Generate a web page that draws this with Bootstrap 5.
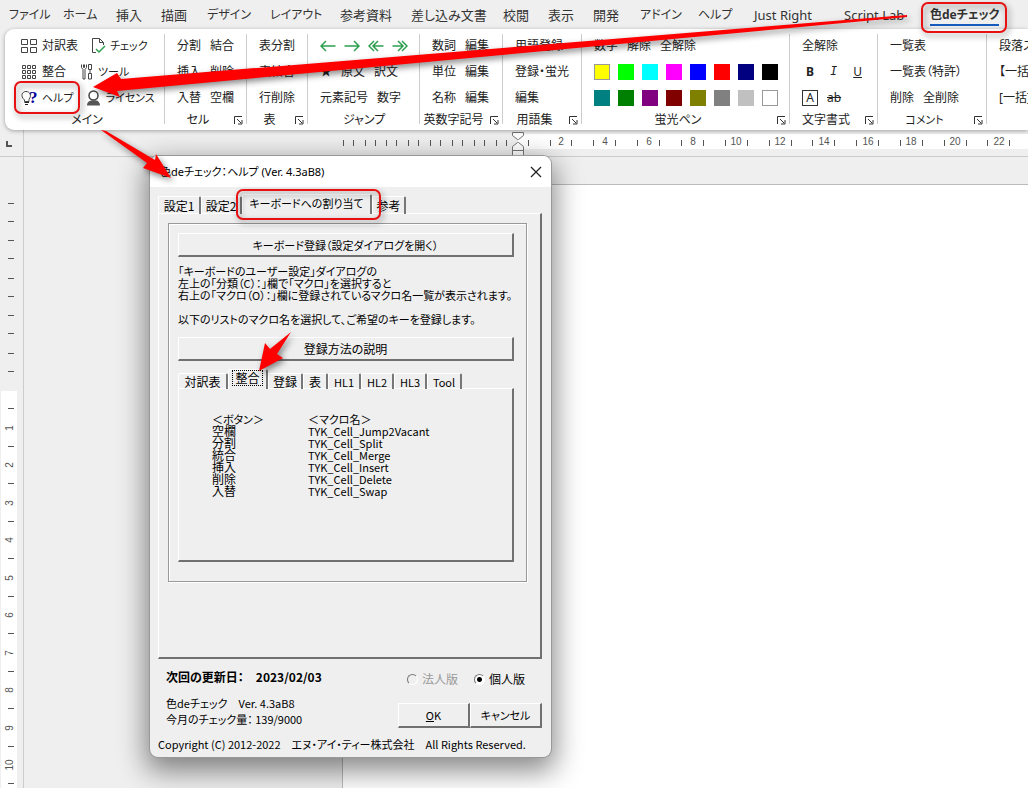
<!DOCTYPE html>
<html lang="ja">
<head>
<meta charset="utf-8">
<meta name="viewport" content="width=device-width, initial-scale=1">
<title>色deチェック ヘルプ</title>
<link rel="stylesheet" href="https://cdn.jsdelivr.net/npm/bootstrap@5.3.0/dist/css/bootstrap.min.css">
<script src="https://cdn.jsdelivr.net/npm/bootstrap@5.3.0/dist/js/bootstrap.bundle.min.js"></script>
<style>
body{background:#efefef;color:#222;font:12px/16px "Noto Sans","Noto Sans CJK JP",sans-serif;font-feature-settings:"palt";overflow:hidden}
button{font:inherit;color:inherit;background:none;border:0;padding:0;white-space:nowrap}
a{color:inherit;text-decoration:none}
.kana{font-size:11px}
.menu-tabs{display:grid;grid-template-columns:54px 53px 45px 46px 63px 70px 71px 92px 45px 45px 47px 58px 56px 90px 86px 70px;height:29px;padding:6px 0 0 9px;font-size:13px;line-height:18px;color:#333;white-space:nowrap}
.menu-tabs .kana{font-size:12px}
.menu-tabs .on{font-weight:700;border-bottom:2px solid #185abd;justify-self:start;height:20px}
.ribbon{height:101px;margin-left:5px;background:#fff;border-radius:9px 0 0 9px;box-shadow:0 1px 4px #0005;overflow:hidden;position:relative}
.rgroup{flex:none;padding:4px 0 0 12px;position:relative}
.rgroup:not(:last-child)::after{content:"";position:absolute;right:0;top:5px;height:90px;width:1px;background:#ccc}
.rrow{display:flex;height:26px;align-items:center;gap:9px;white-space:nowrap}
.rname{display:flex;height:18px;align-items:center;justify-content:center;margin-left:-12px;position:relative}
.rname:has(button){padding-right:16px}
.rname button{position:absolute;right:4px;top:5px;width:9px;height:9px;line-height:0}
.rname button svg,.rrow svg{display:block}
.ic{display:flex;align-items:center;gap:4px}
.swatch{width:16px;height:16px;margin-right:-1px}
.w1{width:160px}.w2{width:82px}.w3{width:61px}.w4{width:112px}.w5{width:83px}.w6{width:79px}.w7{width:208px}.w8{width:88px}.w9{width:109px}.w10{width:120px}
.hruler{height:27px;border-bottom:1px solid #ccc}
.hruler svg,.vruler svg{display:block}
.hruler text,.vruler text{font:10px "Liberation Sans",sans-serif;fill:#555;text-anchor:middle}
.vruler{width:24px;border-right:1px solid #ccc;flex:none;overflow:hidden}
.corner{width:24px;flex:none;border-right:1px solid #ccc}
.work{height:631px}
.page{margin:27px 0 0 318px;border:solid #bbb;border-width:1px 0 0 1px;background:#fff}
.dialog{position:absolute;left:150px;top:156px;width:401px;background:#efefef;border-radius:8px;box-shadow:0 0 0 1px #999,0 10px 28px 4px #0007;color:#000;font-family:"Noto Sans CJK JP",sans-serif}
.titlebar{height:31px;background:#fff;border-radius:8px 8px 0 0;padding:0 9px 0 10px;font-family:"Noto Sans","Noto Sans CJK JP",sans-serif;line-height:18px}
.dbody{padding:7px 9px 5px 8px}
.raised{border:solid;border-width:1px 2px 2px 1px;border-color:#fff #707070 #707070 #fff}
.tabset{display:flex;align-items:flex-end;position:relative;margin-bottom:-1px}
.tabset button{height:16px;line-height:12px;display:flex;align-items:center;justify-content:center;border:solid;border-width:1px 2px 0 1px;border-color:#fff #777 transparent #fff;flex:none;border-radius:2px 2px 0 0}
.tabset button.on{height:20px;background:#efefef;padding-bottom:4px}
.tabset .on .focus{outline:1px dotted #000;padding:1px 2px}
.tabset .tall{height:18px}
.pane{padding:9px 13px 0 9px;height:446px}
.fieldbox{border:1px solid #999;box-shadow:1px 1px 0 #fff,inset 1px 1px 0 #fff;padding:9px 12px 0 9px;height:359px}
.wide{display:block;width:100%;height:24px;line-height:20px}
.note{font-size:11px;line-height:12px;margin:8px 0 12px;white-space:nowrap}
.subpane{height:174px;padding:24px 0 0 33px}
.macros{line-height:12px;border-collapse:collapse}
.macros td,.macros th{padding:0;font-weight:400}
.macros td:last-child,.macros th{font-size:11px}
.macros th:first-child,.macros td:first-child{width:96px}
.radio{appearance:none;width:11px;height:11px;margin:0;border-radius:50%;border:1px solid;border-color:#777 #fff #fff #777;background:#fff}
.radio:checked{background:radial-gradient(#000 0 2px,#fff 3px)}
.radio:disabled{background:#efefef}
.off{color:#999}
.cmd{width:72px;height:25px}
.marks{position:absolute;left:0;top:0;pointer-events:none;filter:drop-shadow(2px 3px 3px #0007)}
</style>
</head>
<body>
<nav class="menu-tabs">
<a href="#" class="kana">ファイル</a><a href="#" class="kana">ホーム</a><a href="#">挿入</a><a href="#">描画</a><a href="#" class="kana">デザイン</a><a href="#" class="kana">レイアウト</a><a href="#">参考資料</a><a href="#">差し込み文書</a><a href="#">校閲</a><a href="#">表示</a><a href="#">開発</a><a href="#" class="kana">アドイン</a><a href="#" class="kana">ヘルプ</a><a href="#">Just Right</a><a href="#">Script Lab</a><a href="#" class="on kana">色deチェック</a>
</nav>
<svg width="0" height="0" class="position-absolute"><defs><symbol id="launch" viewBox="0 0 9 9"><path d="M.5 8V.5H8M3 3l4 4M8 4v4H4" fill="none" stroke="#333"/></symbol></defs></svg>
<section class="ribbon d-flex">
<div class="rgroup w1 ps-3">
<div class="rrow" style="gap:14px"><button class="ic"><svg width="17" height="14" fill="none" stroke="#444"><path d="M.5.5h6v5h-6zM9.500.5h6v5h-6zM.5 8.500h6v5h-6zM9.500 8.500h6v5h-6z"/></svg>対訳表</button><button class="ic kana"><svg width="14" height="16" fill="none" stroke="#444"><path d="M4 14.500H.5V.5h7l4 4V7M7.500.5v4h4"/><path d="M4 11l3 3 6-6" stroke="#2e9e4f" stroke-width="1.500"/></svg>チェック</button></div>
<div class="rrow" style="gap:14px"><button class="ic"><svg width="17" height="14" fill="none" stroke="#444"><path d="M1.500.5h3v3h-3zM6.500.5h3v3h-3zM11.500.5h3v3h-3zM1.500 5.500h3v3h-3zM6.500 5.500h3v3h-3zM11.500 5.500h3v3h-3zM1.500 10.500h3v3h-3zM6.500 10.500h3v3h-3zM11.500 10.500h3v3h-3z"/></svg>整合</button><button class="ic kana"><svg width="14" height="16" fill="none" stroke="#444"><path d="M1.500.5v3l1.500 2v9.500h2V5.500l1.500-2v-3M3.500.5v3h1v-3M8.500.5h3v5h-3zM10 5.500v4M8.500 9.500h3v5.500h-3z"/></svg>ツール</button></div>
<div class="rrow" style="gap:12px"><button class="ic kana"><svg width="17" height="16"><path d="M3.500 10C-1 6 1 1.500 5 1.500s6 4 3 8v2H3.500z" fill="#fff" stroke="#444"/><path d="M3.500 12.500H8M4 14.500h3" stroke="#222"/><text x="8" y="13" font-size="17" font-weight="700" fill="#009" font-family="Liberation Serif">?</text></svg>ヘルプ</button><button class="ic kana"><svg width="16" height="16"><path d="M1 15.500c0-4 3-5 5-5h4c2 0 4 2 4 5z" fill="#555"/><circle cx="7.500" cy="5.500" r="4.500" fill="#fff" stroke="#444" stroke-width="1.500"/></svg>ライセンス</button></div>
<div class="rname">メイン</div></div>
<div class="rgroup w2">
<div class="rrow"><button>分割</button><button>結合</button></div><div class="rrow"><button>挿入</button><button>削除</button></div><div class="rrow"><button>入替</button><button>空欄</button></div>
<div class="rname">セル<button aria-label="セル 詳細"><svg width="9" height="9"><use href="#launch"/></svg></button></div></div>
<div class="rgroup w3">
<div class="rrow"><button>表分割</button></div><div class="rrow"><button>表結合</button></div><div class="rrow"><button>行削除</button></div>
<div class="rname">表<button aria-label="表 詳細"><svg width="9" height="9"><use href="#launch"/></svg></button></div></div>
<div class="rgroup w4">
<div class="rrow" style="gap:8px">
<button aria-label="前"><svg width="16" height="12" fill="none" stroke="#2e9e4f" stroke-width="1.500"><path d="M15.500 6H1M6 1L1 6l5 5"/></svg></button>
<button aria-label="次"><svg width="16" height="12" fill="none" stroke="#2e9e4f" stroke-width="1.500"><path d="M.5 6H15M10 1l5 5-5 5"/></svg></button>
<button aria-label="最初"><svg width="16" height="12" fill="none" stroke="#2e9e4f" stroke-width="1.500"><path d="M15.500 6H5M6 1L1 6l5 5M10 1L5 6l5 5"/></svg></button>
<button aria-label="最後"><svg width="16" height="12" fill="none" stroke="#2e9e4f" stroke-width="1.500"><path d="M.5 6H11M6 1l5 5-5 5M10 1l5 5-5 5"/></svg></button></div>
<div class="rrow"><button>★</button><button>原文</button><button>訳文</button></div><div class="rrow"><button>元素記号</button><button>数字</button></div>
<div class="rname">ジャンプ</div></div>
<div class="rgroup w5">
<div class="rrow"><button>数詞</button><button>編集</button></div><div class="rrow"><button>単位</button><button>編集</button></div><div class="rrow"><button>名称</button><button>編集</button></div>
<div class="rname">英数字記号<button aria-label="英数字記号 詳細"><svg width="9" height="9"><use href="#launch"/></svg></button></div></div>
<div class="rgroup w6">
<div class="rrow"><button>用語登録</button></div><div class="rrow"><button>登録・蛍光</button></div><div class="rrow"><button>編集</button></div>
<div class="rname">用語集<button aria-label="用語集 詳細"><svg width="9" height="9"><use href="#launch"/></svg></button></div></div>
<div class="rgroup w7">
<div class="rrow"><button>数字</button><button>解除</button><button>全解除</button></div>
<div class="rrow"><button class="swatch" aria-label="黄" style="background:#ff0;border:1px solid #999"></button><button class="swatch" aria-label="明るい緑" style="background:#0f0"></button><button class="swatch" aria-label="水色" style="background:#0ff"></button><button class="swatch" aria-label="ピンク" style="background:#f0f"></button><button class="swatch" aria-label="青" style="background:#00f"></button><button class="swatch" aria-label="赤" style="background:#f00"></button><button class="swatch" aria-label="紺" style="background:#000080"></button><button class="swatch" aria-label="黒" style="background:#000"></button></div>
<div class="rrow"><button class="swatch" aria-label="青緑" style="background:#008080"></button><button class="swatch" aria-label="緑" style="background:#008000"></button><button class="swatch" aria-label="紫" style="background:#800080"></button><button class="swatch" aria-label="濃い赤" style="background:#800000"></button><button class="swatch" aria-label="濃い黄" style="background:#808000"></button><button class="swatch" aria-label="灰50%" style="background:#808080"></button><button class="swatch" aria-label="灰25%" style="background:#c0c0c0"></button><button class="swatch" aria-label="なし" style="background:#fff;border:1px solid #999"></button></div>
<div class="rname">蛍光ペン<button aria-label="蛍光ペン 詳細"><svg width="9" height="9"><use href="#launch"/></svg></button></div></div>
<div class="rgroup w8">
<div class="rrow"><button>全解除</button></div><div class="rrow ps-1" style="gap:16px"><button class="fw-bold">B</button><button style="font-family:'Liberation Mono'"><i>I</i></button><button><u>U</u></button></div><div class="rrow"><button style="border:1px solid #333;width:16px;height:16px;line-height:14px">A</button><button><s>ab</s></button></div>
<div class="rname">文字書式<button aria-label="文字書式 詳細"><svg width="9" height="9"><use href="#launch"/></svg></button></div></div>
<div class="rgroup w9">
<div class="rrow"><button>一覧表</button></div><div class="rrow"><button>一覧表（特許）</button></div><div class="rrow"><button>削除</button><button>全削除</button></div>
<div class="rname kana">コメント<button aria-label="コメント 詳細"><svg width="9" height="9"><use href="#launch"/></svg></button></div></div>
<div class="rgroup w10"><div class="rrow"><button>段落スタイル</button></div><div class="rrow"><button>【一括】</button></div><div class="rrow"><button>[一括]</button></div></div>
</section>
<div class="hruler d-flex"><div class="corner"><svg width="23" height="26"><path d="M7 11v5h5" fill="none" stroke="#555" stroke-width="2"/></svg></div>
<svg width="1004" height="26" viewBox="24 130 1004 26"><path d="M518 134h510v15H518z" fill="#fff"/><path d="M343.500 140v6m10-6v6m12-6v6m10-6v6m11-6v6m10-6v6m12-6v6m10-6v6m12-6v6m10-6v6m12-6v6m10-6v6m12-6v6m10-6v6m12-6v6m10-6v6M528.500 140v6m22-6v6m21-6v6m22-6v6m22-6v6m22-6v6m22-6v6m22-6v6m22-6v6m22-6v6m22-6v6m22-6v6m22-6v6m21-6v6m22-6v6m22-6v6m22-6v6m22-6v6m22-6v6m22-6v6m22-6v6m21-6v6m22-6v6" stroke="#555"/><g><text x="561" y="145">2</text><text x="605" y="145">4</text><text x="649" y="145">6</text><text x="693" y="145">8</text><text x="736" y="145">10</text><text x="780" y="145">12</text><text x="824" y="145">14</text><text x="868" y="145">16</text><text x="911" y="145">18</text><text x="955" y="145">20</text><text x="999" y="145">22</text></g><path d="M512.500 132.500h11v3l-5 4h-1l-5-4zM512.500 155.500v-9l5-4h1l5 4v9zM512.500 150.500h11" fill="#fff" stroke="#777"/></svg></div>
<main class="work d-flex">
<div class="vruler"><svg width="23" height="631" viewBox="0 157 23 631"><path d="M1 391h16v397H1z" fill="#fff"/><path d="M8 203.500h6m-6 18h6m-6 19h6m-6 18h6m-6 20h6m-6 18h6m-6 19h6m-6 18h6m-6 20h6m-6 18h6M8 408.500h6m-6 38h6m-6 37h6m-6 38h6m-6 37h6m-6 38h6m-6 37h6m-6 38h6m-6 37h6m-6 38h6m-6 37h6" stroke="#555"/><g transform="rotate(-90)"><text x="-428" y="13">1</text><text x="-465" y="13">2</text><text x="-503" y="13">3</text><text x="-540" y="13">4</text><text x="-578" y="13">5</text><text x="-615" y="13">6</text><text x="-653" y="13">7</text><text x="-690" y="13">8</text><text x="-728" y="13">9</text><text x="-765" y="13">10</text></g></svg></div>
<div class="page flex-grow-1"></div>
</main>
<section class="dialog" role="dialog" aria-labelledby="dlg-title">
<header class="titlebar d-flex align-items-center justify-content-between"><span id="dlg-title" class="kana">色deチェック：ヘルプ (Ver. 4.3aB8)</span><button aria-label="閉じる"><svg class="d-block" width="12" height="12"><path d="M1 1l10 10M11 1L1 11" stroke="#222" stroke-width="1.300"/></svg></button></header>
<div class="dbody">
<div class="tabset"><button class="tall" style="width:43px">設定1</button><button class="tall" style="width:41px">設定2</button><button class="on kana" style="width:130px">キーボードへの割り当て</button><button class="tall" style="width:34px">参考</button></div>
<div class="raised pane">
<div class="fieldbox">
<button class="raised wide kana">キーボード登録（設定ダイアログを開く）</button>
<p class="note">「キーボードのユーザー設定」ダイアログの<br>左上の「分類（C）：」欄で「マクロ」を選択すると<br>右上の「マクロ（O）：」欄に登録されているマクロ名一覧が表示されます。<br><br>以下のリストのマクロ名を選択して、ご希望のキーを登録します。</p>
<button class="raised wide">登録方法の説明</button>
<div class="tabset mt-2"><button style="width:50px">対訳表</button><button class="on" style="width:40px"><span class="focus">整合</span></button><button style="width:35px">登録</button><button style="width:25px">表</button><button class="kana" style="width:33px">HL1</button><button class="kana" style="width:33px">HL2</button><button class="kana" style="width:33px">HL3</button><button class="kana" style="width:35px">Tool</button></div>
<div class="raised subpane"><table class="macros"><thead><tr><th>＜ボタン＞</th><th>＜マクロ名＞</th></tr></thead><tbody><tr><td>空欄</td><td>TYK_Cell_Jump2Vacant</td></tr><tr><td>分割</td><td>TYK_Cell_Split</td></tr><tr><td>統合</td><td>TYK_Cell_Merge</td></tr><tr><td>挿入</td><td>TYK_Cell_Insert</td></tr><tr><td>削除</td><td>TYK_Cell_Delete</td></tr><tr><td>入替</td><td>TYK_Cell_Swap</td></tr></tbody></table></div>
</div></div>
<div class="d-flex justify-content-between align-items-center mt-2 ps-2"><strong>次回の更新日：&emsp;2023/02/03</strong><div class="d-flex gap-3 pt-1" style="padding-right:17px"><label class="d-flex align-items-center gap-1 off"><input class="radio" type="radio" name="ed" disabled>法人版</label><label class="d-flex align-items-center gap-1"><input class="radio" type="radio" name="ed" checked>個人版</label></div></div>
<div class="d-flex justify-content-between ps-2 pt-2"><div class="kana">色deチェック&emsp;Ver. 4.3aB8<br>今月のチェック量： 139/9000</div><div class="d-flex pt-2"><button class="raised cmd kana"><u>O</u>K</button><button class="raised cmd kana">キャンセル</button></div></div>
<div class="kana pt-1 mt-1 text-nowrap">Copyright (C) 2012-2022&emsp;エヌ・アイ・ティー株式会社&emsp;All Rights Reserved.</div>
</div>
</section>
<svg class="marks" width="1028" height="788" aria-hidden="true"><g fill="none" stroke="#e81010" stroke-width="2"><rect x="15" y="82" width="64" height="31" rx="6"/><rect x="922" y="3" width="84" height="29" rx="6"/><rect x="237" y="190" width="143" height="29" rx="6"/></g><g fill="#f00"><path d="M93 87l24-14 4 6L907 15v2L117 91l3 6z"/><path d="M101 130l5 1 49 29 1-6 15 24-28-10 4-5z"/><path d="M259 371l6-28 5 6 21-17-14 22 6 4z"/></g></svg>
</body>
</html>
